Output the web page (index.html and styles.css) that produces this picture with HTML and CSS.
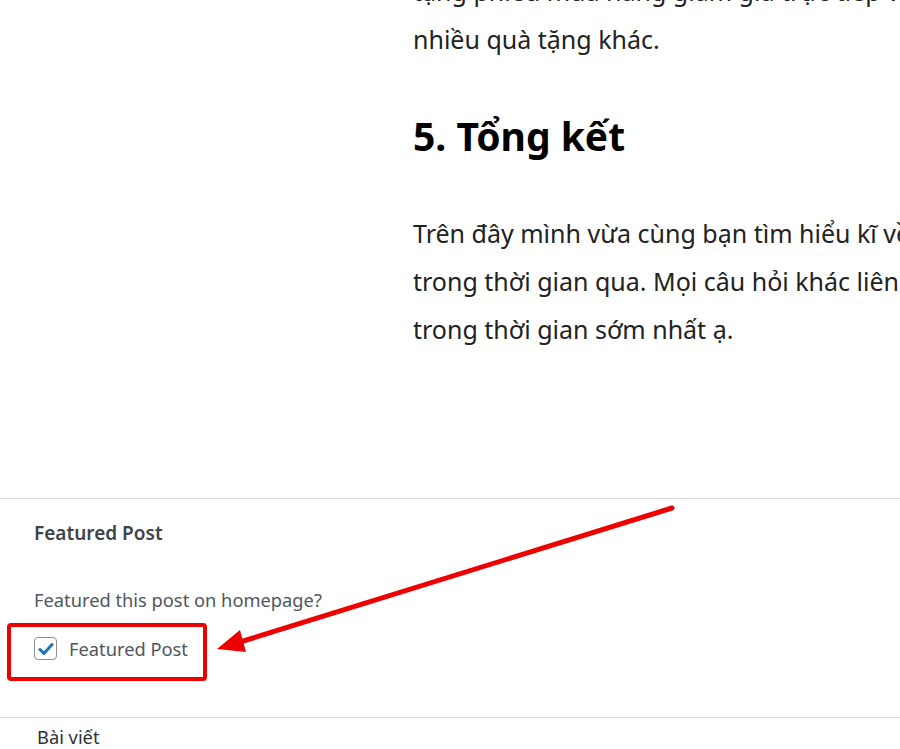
FILE: index.html
```html
<!DOCTYPE html>
<html lang="vi">

<head>
  <meta charset="UTF-8">
  <meta name="viewport" content="width=device-width, initial-scale=1.0">
  <title>Featured Post</title>
  <link rel="stylesheet" href="styles.css">
</head>

<body>
  <div class="page">
    <div class="content">
      <p class="text first">tặng phiếu mua hàng giảm giá trực tiếp và<br>
        nhiều quà tặng khác.</p>
      <h2 class="heading">5. Tổng kết</h2>
      <p class="text">Trên đây mình vừa cùng bạn tìm hiểu kĩ về chương trình<br>
        trong thời gian qua. Mọi câu hỏi khác liên hệ chúng tôi sẽ giải đáp<br>
        trong thời gian sớm nhất ạ.</p>
    </div>

    <div class="metabox">
      <h3 class="metabox-title">Featured Post</h3>
      <p class="metabox-desc">Featured this post on homepage?</p>
      <label class="check-row">
        <span class="checkbox">
          <svg width="16" height="14" viewBox="0 0 16 14">
            <path d="M2 7.5 L6 11.5 L14 2.5" fill="none" stroke="#2271b1" stroke-width="3" stroke-linecap="round" stroke-linejoin="round"/>
          </svg>
        </span>
        Featured Post
      </label>
    </div>

    <div class="next-box">Bài viết</div>

    <!-- annotation drawn over the screenshot -->
    <svg class="annot" width="900" height="749" viewBox="0 0 900 749">
      <rect x="9" y="625" width="196" height="54" rx="2" fill="none" stroke="#ee0000" stroke-width="4"/>
      <line x1="672" y1="508" x2="240" y2="642" stroke="#ee0000" stroke-width="5" stroke-linecap="round"/>
      <polygon points="217,649 240,630 246,652" fill="#ee0000"/>
    </svg>
  </div>
</body>

</html>
```

FILE: styles.css
```css
body {
  margin: 0;
  padding: 0;
  background-color: #fff;
  font-family: "Noto Sans", "Open Sans", sans-serif;
  overflow: hidden;
}

.page {
  position: relative;
  width: 900px;
  height: 749px;
  overflow: hidden;
}

.content {
  display: flow-root;
  padding-left: 413px;
  height: 498px;
  box-sizing: border-box;
}

.text {
  margin: 0;
  font-size: 25px;
  line-height: 48px;
  color: #222;
  white-space: nowrap;
}

.text.first {
  margin-top: -33px;
}

.heading {
  margin: 45px 0 45px 0;
  font-size: 39px;
  line-height: 56px;
  font-weight: 700;
  color: #000;
}

.metabox {
  border-top: 1px solid #dcdcde;
  padding: 19px 0 0 34px;
  height: 219px;
  box-sizing: border-box;
}

.metabox-title {
  margin: 0;
  font-size: 19px;
  font-weight: 600;
  line-height: 30px;
  color: #3c434a;
}

.metabox-desc {
  margin: 37px 0 0 0;
  font-size: 18.3px;
  line-height: 30px;
  color: #50575e;
}

.check-row {
  display: flex;
  align-items: center;
  gap: 12px;
  margin-top: 21px;
  font-size: 18.3px;
  color: #50575e;
}

.checkbox {
  width: 23px;
  height: 23px;
  border: 1px solid #8c8f94;
  border-radius: 4px;
  display: flex;
  align-items: center;
  justify-content: center;
  box-sizing: border-box;
}

.next-box {
  border-top: 1px solid #dcdcde;
  padding: 4px 0 0 37px;
  font-size: 18.3px;
  line-height: 30px;
  color: #2c3338;
}

.annot {
  position: absolute;
  left: 0;
  top: 0;
  pointer-events: none;
}
```
